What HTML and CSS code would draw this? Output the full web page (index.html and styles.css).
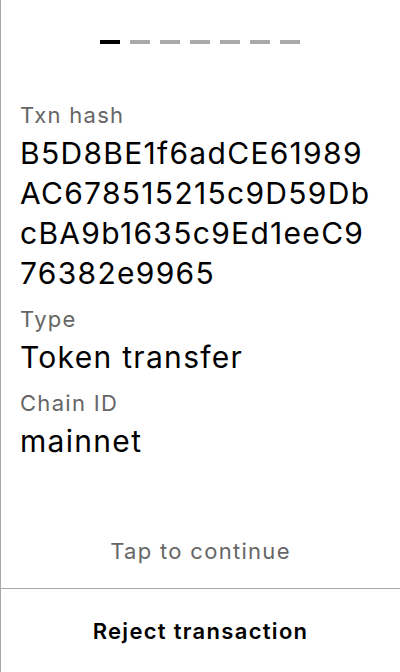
FILE: index.html
```html
<!DOCTYPE html>
<html>
<head>
<meta charset="utf-8">
<link rel="stylesheet" href="styles.css">
</head>
<body>
<div class="screen">
  <div class="pager">
    <span class="dash active"></span>
    <span class="dash"></span>
    <span class="dash"></span>
    <span class="dash"></span>
    <span class="dash"></span>
    <span class="dash"></span>
    <span class="dash"></span>
  </div>
  <div class="details">
    <div class="field">
      <div class="label">Txn hash</div>
      <div class="value hash">B5D8BE1f6adCE61989AC678515215c9D59DbcBA9b1635c9Ed1eeC976382e9965</div>
    </div>
    <div class="field">
      <div class="label">Type</div>
      <div class="value">Token transfer</div>
    </div>
    <div class="field">
      <div class="label">Chain ID</div>
      <div class="value">mainnet</div>
    </div>
  </div>
  <div class="tap">Tap to continue</div>
  <div class="reject">Reject transaction</div>
</div>
</body>
</html>
```
FILE: styles.css
```css
html, body {
  margin: 0;
  padding: 0;
  background: #fff;
}
body {
  font-family: Inter, "Noto Sans", sans-serif;
  color: #000;
  letter-spacing: 1.3px;
}
.screen {
  box-sizing: border-box;
  width: 400px;
  height: 672px;
  border-left: 1px solid #a8a8a8;
  display: flex;
  flex-direction: column;
}
.pager {
  display: flex;
  justify-content: center;
  gap: 10px;
  padding-top: 40px;
  padding-right: 1px;
}
.dash {
  width: 20px;
  height: 4px;
  background: #aaaaaa;
}
.dash.active {
  background: #000;
}
.details {
  flex: 1;
  padding: 57px 19px 0 19px;
  display: flex;
  flex-direction: column;
  gap: 12px;
}
.field {
  display: flex;
  flex-direction: column;
  gap: 4px;
}
.label {
  font-size: 22px;
  line-height: 28px;
  color: #666;
}
.value {
  font-size: 30px;
  line-height: 40px;
}
.hash {
  word-break: break-all;
}
.tap {
  text-align: center;
  font-size: 22px;
  line-height: 28px;
  color: #666;
  padding-bottom: 23px;
}
.reject {
  border-top: 1px solid #a8a8a8;
  height: 83px;
  display: flex;
  align-items: center;
  justify-content: center;
  font-size: 22px;
  font-weight: 600;
}
```
